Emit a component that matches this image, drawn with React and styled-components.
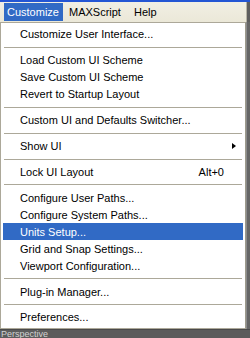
import React from "react";
import styled, { createGlobalStyle } from "styled-components";

const GlobalStyle = createGlobalStyle`
  html, body {
    margin: 0;
    padding: 0;
    background: #5e5e5e;
  }
`;

const Screen = styled.div`
  width: 250px;
  height: 338px;
  display: flex;
  flex-direction: column;
  overflow: hidden;
  background: #5e5e5e;
  font-family: "Liberation Sans", Arial, sans-serif;
  font-size: 11px;
  color: #000;
`;

const TitleStrip = styled.div`
  height: 2px;
  background: #2456d4;
`;

const MenuBar = styled.div`
  height: 20px;
  width: 247px;
  display: flex;
  align-items: flex-start;
  padding: 1px 0 0 4px;
  box-sizing: border-box;
  background: linear-gradient(#f1efe4, #ebe8d8);
  border-right: 1px solid #b8b5a6;
`;

const TopItem = styled.div`
  height: 18px;
  line-height: 18px;
  padding: ${(p) => (p.active ? "0 4px 0 3px" : "0 7px 0 6px")};
  background: ${(p) => (p.active ? "#316ac5" : "transparent")};
  color: ${(p) => (p.active ? "#fff" : "#000")};
  font-size: 11px;
`;

const Body = styled.div`
  flex: 1;
  display: flex;
  min-height: 0;
`;

const Popup = styled.div`
  width: 246px;
  box-sizing: border-box;
  border: 1px solid #aca899;
  border-right-color: #9d9a8c;
  background: #fff;
  padding: 3px 2px 2px 2px;
  display: flex;
  flex-direction: column;
`;

const Shade = styled.div`
  flex: 1;
  background: #666;
  border-left: 1px solid #8c8c8c;
`;

const Item = styled.div`
  height: 17px;
  display: flex;
  align-items: center;
  padding: 0 9px 0 17px;
  background: ${(p) => (p.selected ? "#316ac5" : "transparent")};
  color: ${(p) => (p.selected ? "#fff" : "#000")};
  font-size: 11px;
  white-space: nowrap;
`;

const Label = styled.span`
  flex: 1;
`;

const Shortcut = styled.span`
  margin-right: 10px;
`;

const Arrow = styled.span`
  width: 0;
  height: 0;
  margin-right: -2px;
  border-top: 3.5px solid transparent;
  border-bottom: 3.5px solid transparent;
  border-left: 4px solid #000;
`;

const Separator = styled.div`
  height: 9px;
  display: flex;
  align-items: center;
  padding: 0 1px;

  &::after {
    content: "";
    flex: 1;
    height: 1px;
    background: #aca899;
  }
`;

const Footer = styled.div`
  height: 8px;
  background: #5c5c5c;
  border-top: 1px solid #4a4a4a;
  overflow: hidden;
  color: #d2d2d2;
  font-size: 9px;
  line-height: 8px;
  padding-left: 1px;
`;

const groups = [
  ["Customize User Interface..."],
  ["Load Custom UI Scheme", "Save Custom UI Scheme", "Revert to Startup Layout"],
  ["Custom UI and Defaults Switcher..."],
  ["Show UI"],
  ["Lock UI Layout"],
  [
    "Configure User Paths...",
    "Configure System Paths...",
    "Units Setup...",
    "Grid and Snap Settings...",
    "Viewport Configuration...",
  ],
  ["Plug-in Manager..."],
  ["Preferences..."],
];

export default function App() {
  return (
    <>
      <GlobalStyle />
      <Screen>
        <TitleStrip />
        <MenuBar>
          <TopItem active>Customize</TopItem>
          <TopItem>MAXScript</TopItem>
          <TopItem>Help</TopItem>
        </MenuBar>
        <Body>
          <Popup>
            {groups.map((group, gi) => (
              <React.Fragment key={gi}>
                {gi > 0 && <Separator />}
                {group.map((label) => (
                  <Item key={label} selected={label === "Units Setup..."}>
                    <Label>{label}</Label>
                    {label === "Lock UI Layout" && <Shortcut>Alt+0</Shortcut>}
                    {label === "Show UI" && <Arrow />}
                  </Item>
                ))}
              </React.Fragment>
            ))}
          </Popup>
          <Shade />
        </Body>
        <Footer>Perspective</Footer>
      </Screen>
    </>
  );
}
